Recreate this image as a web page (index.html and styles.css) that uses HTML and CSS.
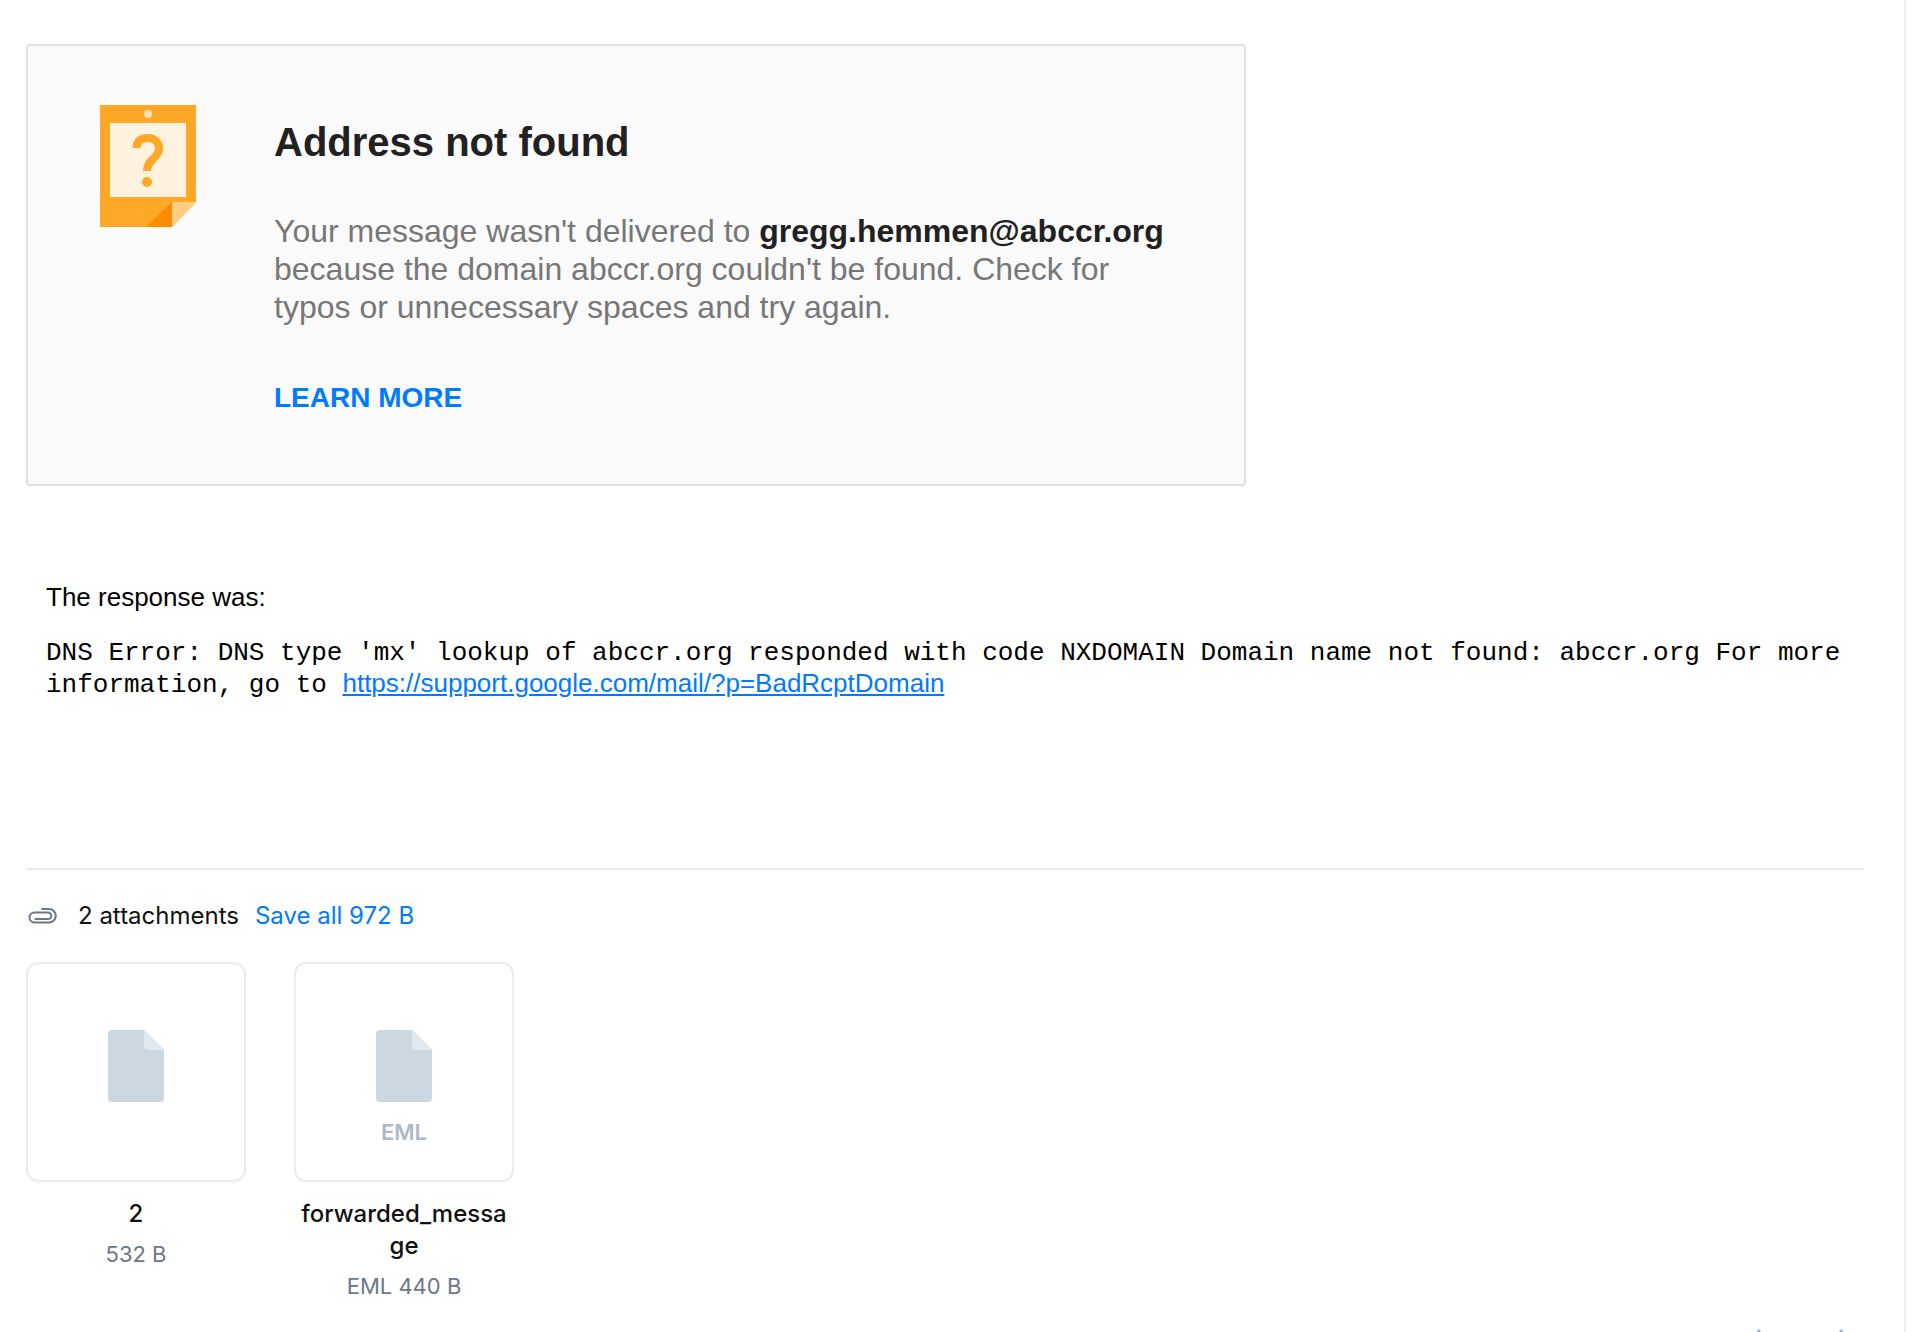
FILE: index.html
```html
<!DOCTYPE html>
<html lang="en">
<head>
<meta charset="utf-8">
<title>Address not found</title>
<link rel="stylesheet" href="styles.css">
</head>
<body>
<main class="message">
  <section class="notice">
    <svg class="notice-icon" viewBox="0 0 96 122" aria-hidden="true">
      <path fill="#ffa726" d="M0 0h96v97l-24 25H0z"/>
      <circle cx="48" cy="9" r="4" fill="#ffe0b2"/>
      <path fill="#fff3e0" d="M10 18h76v74H10z"/>
      <path fill="none" stroke="#ffa726" stroke-width="8" d="M36.500 43C36.500 36 41 33 48 33S59 37.500 59 44C59 53 47 54 47 66"/>
      <circle cx="47" cy="77" r="5" fill="#ffa726"/>
      <path fill="#fb8c00" d="M72 97v25H46z"/>
      <path fill="#ffcc80" d="M72 97h24l-24 25z"/>
    </svg>
    <div class="notice-body">
      <h1 class="notice-title">Address not found</h1>
      <p class="notice-text">Your message wasn't delivered to <strong>gregg.hemmen@abccr.org</strong> because the domain abccr.org couldn't be found. Check for typos or unnecessary spaces and try again.</p>
      <a class="notice-link" href="#">LEARN MORE</a>
    </div>
  </section>

  <section class="response">
    <p class="response-label">The response was:</p>
    <p class="response-code">DNS Error: DNS type 'mx' lookup of abccr.org responded with code NXDOMAIN Domain name not found: abccr.org For more information, go to <a class="response-link" href="#">https://support.google.com/mail/?p=BadRcptDomain</a></p>
  </section>

  <section class="attachments">
    <header class="attachments-head">
      <svg class="clip-icon" viewBox="0 0 32 24" aria-hidden="true">
        <path d="M16 5h7a6.500 6.500 0 0 1 0 13.500H8.500a5 5 0 0 1 0-10H22a3.300 3.300 0 0 1 0 6.600H9.500"/>
      </svg>
      <span class="attachments-count">2 attachments</span>
      <button class="save-all" type="button">Save all 972 B</button>
    </header>
    <ul class="files">
      <li class="file">
        <div class="file-tile">
          <svg class="file-icon" viewBox="0 0 56 72" aria-hidden="true">
            <path fill="#ccd8e1" d="M4 0h32l20 20v48a4 4 0 0 1-4 4H4a4 4 0 0 1-4-4V4a4 4 0 0 1 4-4z"/>
            <path fill="#e1e8ee" d="M36 0l20 20H40a4 4 0 0 1-4-4z"/>
          </svg>
        </div>
        <span class="file-name">2</span>
        <span class="file-size">532 B</span>
      </li>
      <li class="file">
        <div class="file-tile">
          <svg class="file-icon" viewBox="0 0 56 72" aria-hidden="true">
            <path fill="#ccd8e1" d="M4 0h32l20 20v48a4 4 0 0 1-4 4H4a4 4 0 0 1-4-4V4a4 4 0 0 1 4-4z"/>
            <path fill="#e1e8ee" d="M36 0l20 20H40a4 4 0 0 1-4-4z"/>
          </svg>
          <span class="file-type">EML</span>
        </div>
        <span class="file-name">forwarded_message</span>
        <span class="file-size">EML 440 B</span>
      </li>
    </ul>
  </section>

  <footer class="actions">
    <button class="action" type="button" aria-label="Reply">
      <svg viewBox="0 0 32 32" aria-hidden="true"><path d="M12 2L3 11l9 9M3 11h17a9 9 0 0 1 9 9v6"/></svg>
    </button>
    <button class="action" type="button" aria-label="Forward">
      <svg viewBox="0 0 32 32" aria-hidden="true"><path d="M20 2l9 9-9 9M29 11H12a9 9 0 0 0-9 9v6"/></svg>
    </button>
  </footer>
</main>
</body>
</html>
```
FILE: styles.css
```css
* {
  box-sizing: border-box;
}

body {
  margin: 0;
  height: 100vh;
  overflow: hidden;
  background: #fff;
  color: #000;
  font-family: "Liberation Sans", Arial, sans-serif;
}

h1,
p,
ul {
  margin: 0;
  padding: 0;
}

a {
  color: #007aff;
}

button {
  padding: 0;
  border: 0;
  background: none;
  font: inherit;
  cursor: pointer;
}

.message {
  min-height: 100vh;
  margin-right: 26px;
  padding: 44px 40px 0 26px;
  border-right: 2px solid #ebebeb;
}

/* Delivery failure card */
.notice {
  display: flex;
  align-items: flex-start;
  gap: 78px;
  max-width: 1220px;
  padding: 59px 72px 70px;
  border: 2px solid #e0e0e0;
  border-radius: 4px;
  background: #fafafa;
}

.notice-icon {
  flex: none;
  width: 96px;
  height: 122px;
}

.notice-body {
  padding-top: 11px;
}

.notice-title {
  margin-bottom: 44px;
  color: #212121;
  font-size: 40px;
  line-height: 52px;
}

.notice-text {
  margin-bottom: 56px;
  color: #777;
  font-size: 32px;
  line-height: 38px;
}

.notice-text strong {
  color: #212121;
}

.notice-link {
  display: block;
  font-size: 28px;
  font-weight: 700;
  line-height: 32px;
  text-decoration: none;
}

/* Server response */
.response {
  padding: 96px 0 168px 20px;
  font-size: 26px;
  line-height: 30px;
}

.response-label {
  margin-bottom: 26px;
}

.response-code {
  font-family: "Liberation Mono", "Courier New", monospace;
}

.response-link {
  font-family: "Liberation Sans", Arial, sans-serif;
}

/* Attachments */
.attachments {
  border-top: 2px solid #ebebeb;
  font-family: Inter, sans-serif;
}

.attachments-head {
  display: flex;
  align-items: center;
  padding: 30px 0;
  font-size: 24px;
  line-height: 32px;
}

.clip-icon {
  width: 32px;
  height: 24px;
  margin-right: 20px;
  fill: none;
  stroke: #6b7688;
  stroke-width: 2;
  stroke-linecap: round;
}

.attachments-count {
  margin-right: 16px;
  color: #111;
}

.save-all {
  color: #007aff;
}

.files {
  display: flex;
  gap: 48px;
  list-style: none;
}

.file {
  display: flex;
  flex-direction: column;
  width: 220px;
  text-align: center;
}

.file-tile {
  display: flex;
  flex-direction: column;
  align-items: center;
  height: 220px;
  margin-bottom: 16px;
  padding-top: 66px;
  border: 2px solid #ebebeb;
  border-radius: 12px;
}

.file-icon {
  width: 56px;
  height: 72px;
}

.file-type {
  margin-top: 16px;
  color: #aeb8c6;
  font-size: 22px;
  font-weight: 600;
  line-height: 28px;
}

.file-name {
  margin-bottom: 8px;
  padding: 0 6px;
  color: #111;
  font-size: 24px;
  font-weight: 500;
  line-height: 32px;
  overflow-wrap: anywhere;
}

.file-size {
  color: #6b7688;
  font-size: 22px;
  line-height: 32px;
}

/* Reply and forward buttons */
.actions {
  display: flex;
  justify-content: flex-end;
  gap: 40px;
  padding: 26px 12px;
}

.action {
  width: 32px;
  height: 32px;
}

.action svg {
  display: block;
  fill: none;
  stroke: #a4b1c2;
  stroke-width: 3;
}
```
